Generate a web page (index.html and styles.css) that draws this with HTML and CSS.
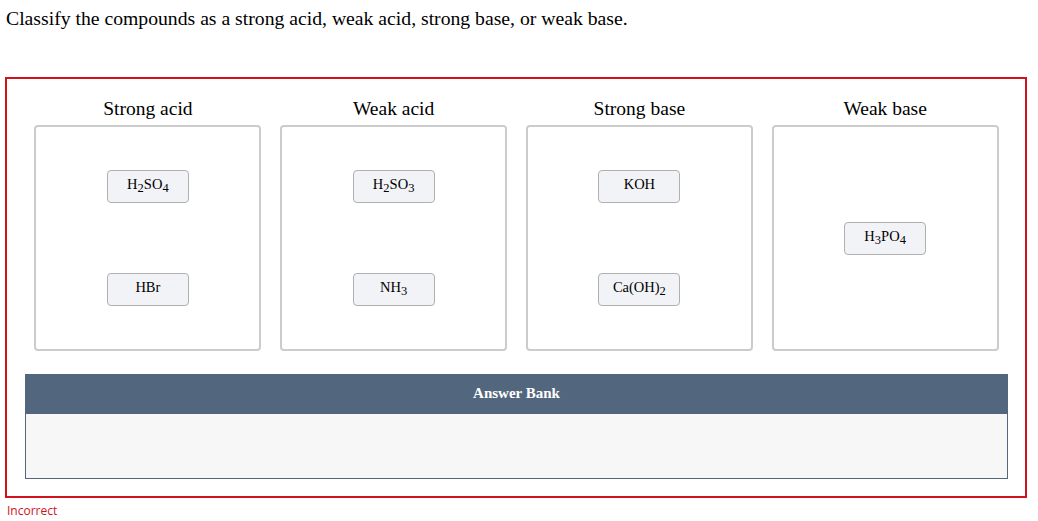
FILE: index.html
```html
<!DOCTYPE html>
<html>
<head>
<meta charset="utf-8">
<link rel="stylesheet" href="styles.css">
</head>
<body>
<p class="prompt">Classify the compounds as a strong acid, weak acid, strong base, or weak base.</p>
<div class="question">
  <div class="bins">
    <div class="bin">
      <div class="bin-title">Strong acid</div>
      <div class="bin-box">
        <div class="chip">H<sub>2</sub>SO<sub>4</sub></div>
        <div class="chip">HBr</div>
      </div>
    </div>
    <div class="bin">
      <div class="bin-title">Weak acid</div>
      <div class="bin-box">
        <div class="chip">H<sub>2</sub>SO<sub>3</sub></div>
        <div class="chip">NH<sub>3</sub></div>
      </div>
    </div>
    <div class="bin">
      <div class="bin-title">Strong base</div>
      <div class="bin-box">
        <div class="chip">KOH</div>
        <div class="chip">Ca(OH)<sub>2</sub></div>
      </div>
    </div>
    <div class="bin">
      <div class="bin-title">Weak base</div>
      <div class="bin-box">
        <div class="chip">H<sub>3</sub>PO<sub>4</sub></div>
      </div>
    </div>
  </div>
  <div class="bank">
    <div class="bank-head">Answer Bank</div>
    <div class="bank-body"></div>
  </div>
</div>
<div class="status">Incorrect</div>
</body>
</html>
```

FILE: styles.css
```css
html, body {
  margin: 0;
  padding: 0;
  background: #ffffff;
}

body {
  width: 1038px;
  font-family: "Liberation Serif", "Times New Roman", serif;
  color: #000000;
}

.prompt {
  margin: 7px 0 0 0;
  padding-left: 6px;
  font-size: 19.7px;
  line-height: 22px;
}

.question {
  margin: 48px 0 0 5px;
  width: 1022px;
  box-sizing: border-box;
  border: 2px solid #d0121d;
  padding: 19px 17px 17px 18px;
}

.bins {
  display: grid;
  grid-template-columns: repeat(4, 1fr);
}

.bin {
  display: flex;
  flex-direction: column;
  align-items: center;
}

.bin-title {
  font-size: 19.5px;
  line-height: 22px;
  margin-bottom: 5px;
  text-align: center;
}

.bin-box {
  width: 227px;
  height: 226px;
  box-sizing: border-box;
  border: 2px solid #cccccc;
  border-radius: 4px;
  display: flex;
  flex-direction: column;
  align-items: center;
  justify-content: center;
  gap: 70px;
}

.chip {
  width: 82px;
  height: 33px;
  box-sizing: border-box;
  border: 1px solid #b0b0b0;
  border-radius: 4px;
  background: #f2f3f7;
  font-size: 14.5px;
  line-height: 27px;
  padding-bottom: 2px;
  text-align: center;
}

.chip sub {
  font-size: 12.5px;
  line-height: 0;
  vertical-align: -3px;
}

.bank {
  margin-top: 23px;
}

.bank-head {
  height: 40px;
  background: #52667e;
  color: #ffffff;
  font-weight: bold;
  font-size: 15px;
  line-height: 38px;
  text-align: center;
}

.bank-body {
  height: 65px;
  box-sizing: border-box;
  background: #f7f7f7;
  border: 1px solid #52667e;
  border-top: none;
}

.status {
  margin-top: 5px;
  padding-left: 7px;
  font-family: "Open Sans", "Liberation Sans", sans-serif;
  font-size: 12px;
  line-height: 16px;
  color: #d0121d;
}
```
